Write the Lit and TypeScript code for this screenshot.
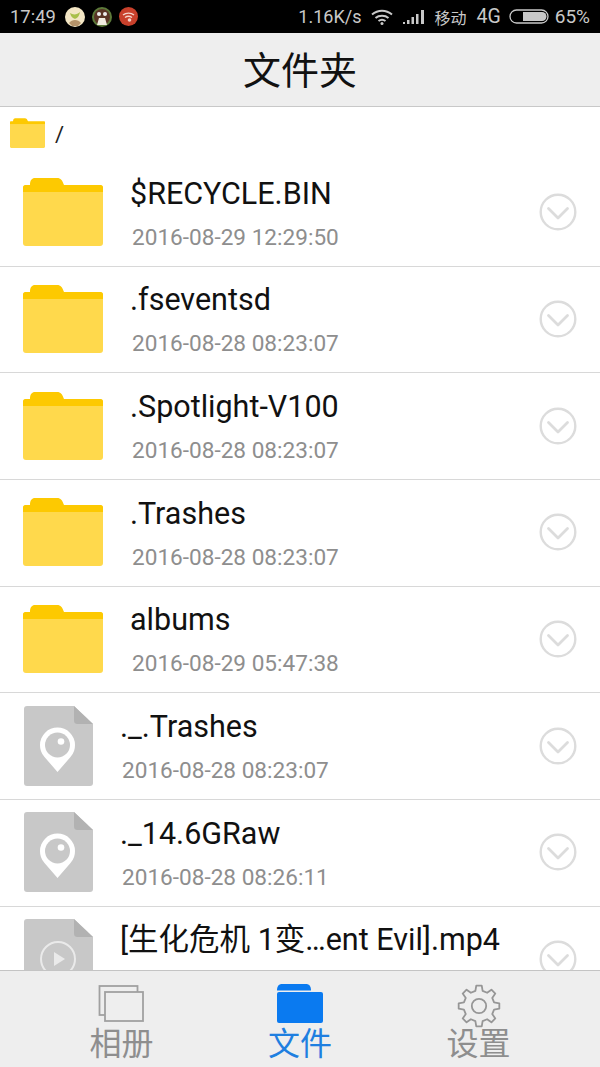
import { LitElement, html, css, svg } from "lit";
import { customElement } from "lit/decorators.js";

const gearPath = (() => {
  const cx = 22, cy = 22, R = 20.5, r = 15.5, n = 8;
  const pts: string[] = [];
  for (let i = 0; i < n; i++) {
    const a = (i * 2 * Math.PI) / n - Math.PI / 2;
    const step = (2 * Math.PI) / n;
    const pairs: [number, number][] = [
      [r, a - step * 0.3],
      [R, a - step * 0.17],
      [R, a + step * 0.17],
      [r, a + step * 0.3],
    ];
    for (const [rad, ang] of pairs) {
      pts.push(`${(cx + rad * Math.cos(ang)).toFixed(2)} ${(cy + rad * Math.sin(ang)).toFixed(2)}`);
    }
  }
  return "M" + pts.join("L") + "Z";
})();

const folderIcon = (cls: string) => html`<svg class=${cls} viewBox="0 0 80 68">
  <path d="M7 7C7 2 9 0 12 0H34C38 0 39 2 41 7H78C79 7 80 8 80 9V15H0V9C0 8 1 7 2 7Z" fill="#fdc901"/>
  <path d="M0 14H80V65C80 67 79 68 77 68H3C1 68 0 67 0 65Z" fill="#ffd94c"/>
</svg>`;

const fileIcon = (kind: string) => html`<svg class="file" viewBox="0 0 69 80">
  <path d="M3 0H50L69 18V77C69 79 68 80 66 80H3C1 80 0 79 0 77V3C0 1 1 0 3 0Z" fill="#c8c8c8"/>
  <path d="M50 0L69 18H54C51 18 50 17 50 14Z" fill="#b2b2b2"/>
  ${kind === "pin"
    ? svg`<path d="M33.500 66L20.500 51C17 47 16 43 16 39A17.500 17.500 0 0 1 51 39C51 43 50 47 46.500 51Z" fill="#fff"/>
        <circle cx="33.500" cy="39" r="12.500" fill="#c8c8c8"/>
        <circle cx="37" cy="35.500" r="3.300" fill="#fff"/>`
    : svg`<circle cx="34" cy="40" r="17" fill="none" stroke="#eaeaea" stroke-width="2"/><path d="M30 33L41 40L30 47Z" fill="#eaeaea"/>`}
</svg>`;

const chevron = html`<svg class="chev" viewBox="0 0 38 38">
  <circle cx="19" cy="19" r="17.300" fill="none" stroke="#dcdcdc" stroke-width="2.400"/>
  <path d="M9.500 15.500L19 25L28.500 15.500" fill="none" stroke="#dcdcdc" stroke-width="2.800" stroke-linecap="round" stroke-linejoin="round"/>
</svg>`;

const rows = [
  { k: "folder", n: "$RECYCLE.BIN", d: "2016-08-29 12:29:50" },
  { k: "folder", n: ".fseventsd", d: "2016-08-28 08:23:07" },
  { k: "folder", n: ".Spotlight-V100", d: "2016-08-28 08:23:07" },
  { k: "folder", n: ".Trashes", d: "2016-08-28 08:23:07" },
  { k: "folder", n: "albums", d: "2016-08-29 05:47:38" },
  { k: "pin", n: "._.Trashes", d: "2016-08-28 08:23:07" },
  { k: "pin", n: "._14.6GRaw", d: "2016-08-28 08:26:11" },
  { k: "play", n: "[生化危机 1变…ent Evil].mp4", d: "" },
];

@customElement("app-root")
export class AppRoot extends LitElement {
  static styles = css`
    :host {
      display: flex;
      flex-direction: column;
      width: 600px;
      height: 1067px;
      overflow: hidden;
      background: #fff;
      font-family: Roboto, "Noto Sans CJK SC", sans-serif;
    }
    .status {
      height: 33px;
      flex: none;
      background: #000;
      color: #c9c9c9;
      display: flex;
      align-items: center;
      font-size: 18px;
      padding: 0 10px;
      box-sizing: border-box;
    }
    .status svg { display: block; flex: none; }
    .time { font-size: 18.400px; margin-right: 9px; }
    .avatar { margin-right: 7px; }
    .spacer { flex: 1; }
    .speed { margin-right: 10px; }
    .wifi { margin-right: 10px; }
    .signal { margin-right: 10px; }
    .carrier { font-size: 16px; margin-right: 10px; }
    .net { font-size: 19.500px; margin-right: 8px; }
    .batt { margin-right: 6px; }
    .pct { font-size: 19px; }
    .header {
      height: 74px;
      flex: none;
      box-sizing: border-box;
      background: #eeeeee;
      border-bottom: 1px solid #c8c8c8;
      display: flex;
      align-items: center;
      justify-content: center;
      font-size: 38px;
      color: #111;
      padding-bottom: 5px;
    }
    .list { flex: 1; min-height: 0; overflow: hidden; }
    .crumb {
      height: 53px;
      display: flex;
      align-items: center;
      padding-left: 10px;
      padding-top: 1px;
      box-sizing: border-box;
      font-size: 22px;
      color: #222;
    }
    .crumb-folder { width: 35px; height: 30px; margin-right: 10px; margin-top: -3px; }
    .row {
      height: 106.67px;
      box-sizing: border-box;
      border-bottom: 1px solid #d8d8d8;
      display: flex;
      align-items: center;
      padding-left: 23px;
      padding-right: 23px;
    }
    .folder { width: 80px; height: 68px; flex: none; margin-right: 27px; margin-top: -1px; }
    .file { width: 69px; height: 80px; flex: none; margin-left: 1px; margin-right: 27px; margin-top: -1px; }
    .text { flex: 1; min-width: 0; margin-top: 3px; }
    .name { font-size: 30.500px; line-height: 36px; color: #111; white-space: nowrap; margin-bottom: 11px; }
    .date { font-size: 22.600px; line-height: 30px; min-height: 30px; color: #8e8e8e; white-space: nowrap; padding-left: 2px; }
    .chev { width: 38px; height: 38px; flex: none; margin-top: -1px; }
    .tabs {
      height: 97px;
      flex: none;
      box-sizing: border-box;
      background: #eeeeee;
      border-top: 1px solid #c4c4c4;
      display: grid;
      grid-template-columns: 243px 114px 243px;
    }
    .tab {
      display: flex;
      flex-direction: column;
      align-items: center;
      padding-top: 13px;
      font-size: 32px;
      line-height: 36px;
      color: #8e8e8e;
    }
    .tab svg { display: block; height: 42px; }
    .tab .gear { height: 44px; margin-bottom: -2px; }
    .tab.active { color: #1f7fe0; }
  `;

  render() {
    return html`
      <div class="status">
        <span class="time">17:49</span>
        <svg class="avatar" width="20" height="20" viewBox="0 0 20 20">
          <circle cx="10" cy="10" r="10" fill="#f3e6c4"/><path d="M4 16C7 12 13 12 16 16L13 19H7Z" fill="#b5936a"/><path d="M5 6C8 8 12 8 15 5C14 10 12 11 10 12C8 11 6 10 5 6Z" fill="#a9c04a"/>
        </svg>
        <svg class="avatar" width="20" height="20" viewBox="0 0 20 20">
          <circle cx="10" cy="10" r="10" fill="#5d7a3a"/><circle cx="10" cy="10" r="8" fill="#5a3526"/><circle cx="7" cy="7" r="2" fill="#eee"/><circle cx="13" cy="7" r="2" fill="#eee"/><path d="M5 18L7 11H13L15 18Z" fill="#f0ece0"/>
        </svg>
        <svg width="19" height="19" viewBox="0 0 19 19">
          <circle cx="9.500" cy="9.500" r="9.500" fill="#c8402b"/>
          <path d="M4 8C7 5.500 12 5.500 15 8M6 10.500C8 9 11 9 13 10.500" fill="none" stroke="#f4d5cc" stroke-width="1.400"/><circle cx="10.500" cy="13" r="1.800" fill="#f4d5cc"/>
        </svg>
        <span class="spacer"></span>
        <span class="speed">1.16K/s</span>
        <svg class="wifi" width="22" height="16" viewBox="0 0 22 16">
          <path d="M1 5.500C7 .5 15 .5 21 5.500M4.500 9C8 6 14 6 17.500 9M7.500 12C9.500 10.500 12.500 10.500 14.500 12" fill="none" stroke="#c9c9c9" stroke-width="2"/><circle cx="11" cy="14.500" r="1.500" fill="#c9c9c9"/>
        </svg>
        <svg class="signal" width="21" height="15" viewBox="0 0 21 15">
          <path d="M0 13h2v2h-2zM4 11h2.500v4h-2.500zM8.500 8h2.500v7h-2.500zM13 5h2.500v10h-2.500zM18 1h3v14h-3z" fill="#c9c9c9"/>
        </svg>
        <span class="carrier">移动</span>
        <span class="net">4G</span>
        <svg class="batt" width="40" height="15" viewBox="0 0 40 15">
          <rect x="1" y="1" width="38" height="13" rx="6.500" fill="none" stroke="#c9c9c9" stroke-width="1.300"/>
          <path d="M14 3H33A4.500 4.500 0 0 1 33 12H14Z" fill="#c9c9c9"/>
        </svg>
        <span class="pct">65%</span>
      </div>
      <div class="header">文件夹</div>
      <div class="list">
        <div class="crumb">${folderIcon("crumb-folder")}<span>/</span></div>
        ${rows.map(
          (r) => html`<div class="row">
            ${r.k === "folder" ? folderIcon("folder") : fileIcon(r.k)}
            <div class="text">
              <div class="name">${r.n}</div>
              <div class="date">${r.d}</div>
            </div>
            ${chevron}
          </div>`
        )}
      </div>
      <div class="tabs">
        <div class="tab">
          <svg width="48" height="42" viewBox="0 0 48 42" fill="#eee" stroke="#a0a0a0" stroke-width="1.800">
            <rect x="1.500" y="2" width="38" height="29"/><rect x="7" y="8" width="38" height="29"/>
          </svg>
          <span>相册</span>
        </div>
        <div class="tab active">
          <svg width="46" height="42" viewBox="0 0 46 42">
            <path d="M0 6.500C0 2 2 0 5 0H29C32 0 34 2 34 6.500Z" fill="#0a7af0"/>
            <rect x="0" y="8" width="46" height="31" rx="2" fill="#0a7af0"/>
          </svg>
          <span>文件</span>
        </div>
        <div class="tab">
          <svg class="gear" width="44" height="44" viewBox="0 0 44 44" fill="none" stroke="#969696" stroke-width="1.800" stroke-linejoin="round">
            <path d=${gearPath} />
            <circle cx="22" cy="22" r="7.200" />
          </svg>
          <span>设置</span>
        </div>
      </div>
    `;
  }
}
